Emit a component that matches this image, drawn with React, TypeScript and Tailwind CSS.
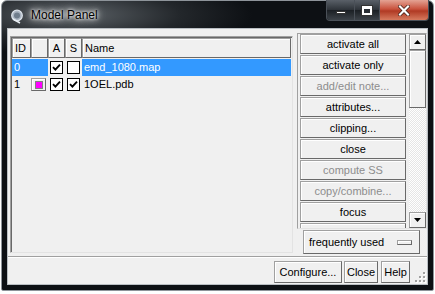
import React from "react";

const F = "font-['Liberation_Sans',Arial,sans-serif]";

function Check({ on }: { on: boolean }) {
  return (
    <div className="w-[13px] h-[13px] border border-black bg-white flex items-center justify-center">
      {on && (
        <svg width="9" height="9" viewBox="0 0 9 9">
          <path d="M1 4.2 L3.4 6.6 L8 1.6" stroke="#000" strokeWidth="1.9" fill="none" />
        </svg>
      )}
    </div>
  );
}

const btnCls =
  "h-[20px] mb-[1px] shrink-0 flex items-center justify-center text-[11px] bg-[#f0f0f0] border border-[#a0a0a0] border-r-[#696969] border-b-[#696969] shadow-[inset_1px_1px_0_#ffffff]";

const raised =
  "bg-[#f0f0f0] border border-[#a0a0a0] border-r-[#696969] border-b-[#696969] shadow-[inset_1px_1px_0_#ffffff]";

const buttons: [string, boolean][] = [
  ["activate all", true],
  ["activate only", true],
  ["add/edit note...", false],
  ["attributes...", true],
  ["clipping...", true],
  ["close", true],
  ["compute SS", false],
  ["copy/combine...", false],
  ["focus", true],
  ["", true],
];

export default function App() {
  return (
    <div className={`w-[435px] h-[294px] bg-white ${F}`}>
      <div className="ml-[1px] w-[433px] h-[291px] rounded-t-[6px] rounded-b-[2px] border border-[#8e949a] bg-[radial-gradient(ellipse_180px_40px_at_70px_14px,#5d6368_0%,#23272b_60%,#0d1014_100%)] flex flex-col">
        {/* title bar */}
        <div className="h-[27px] shrink-0 flex items-start">
          <div className="ml-[8px] mt-[8px] w-[14px] h-[15px]">
            <svg width="14" height="15" viewBox="0 0 14 15">
              <circle cx="7" cy="6.5" r="5.3" fill="#aab4c0" stroke="#dfe6ee" strokeWidth="1.2" />
              <circle cx="7" cy="6.5" r="3" fill="#6f7d8c" />
              <path d="M3 10 L10 14" stroke="#e8eef4" strokeWidth="1.6" />
            </svg>
          </div>
          <div className="ml-[7px] mt-[7px] text-[12px] leading-[14px] text-black [text-shadow:0_0_6px_#ffffff,0_0_3px_#ffffff,0_0_10px_#ffffff]">
            Model Panel
          </div>
          <div className="flex-1" />
          <div className="mr-[4px] -mt-[1px] flex h-[21px] rounded-b-[4px] border border-t-0 border-[#4a5058] overflow-hidden">
            <div className="w-[28px] h-full bg-[linear-gradient(#5a6068,#2d3238_50%,#1b1f24_51%,#3c4248)] border-r border-[#4a5058] flex items-center justify-center">
              <div className="w-[10px] h-[3px] mt-[5px] bg-white border border-[#333]" />
            </div>
            <div className="w-[25px] h-full bg-[linear-gradient(#5a6068,#2d3238_50%,#1b1f24_51%,#3c4248)] border-r border-[#4a5058] flex items-center justify-center">
              <div className="w-[10px] h-[9px] border-2 border-t-[3px] border-white bg-[#2a2f35] outline outline-1 outline-[#333]" />
            </div>
            <div className="w-[48px] h-full bg-[linear-gradient(#e4a394,#c9523d_45%,#b03a24_55%,#d67a5e)] flex items-center justify-center">
              <svg width="12" height="11" viewBox="0 0 12 11">
                <path d="M2 1.5 L10 9.5 M10 1.5 L2 9.5" stroke="#3a1a12" strokeWidth="3.6" strokeLinecap="square" />
                <path d="M2 1.5 L10 9.5 M10 1.5 L2 9.5" stroke="#ffffff" strokeWidth="2.2" strokeLinecap="square" />
              </svg>
            </div>
          </div>
        </div>

        {/* content */}
        <div className="mx-[5px] w-[421px] h-[257px] border border-[#b9bec3] bg-[#f0f0f0] flex flex-col relative">
          <div className="h-[227px] shrink-0 flex items-start">
            {/* table */}
            <div className="ml-[2px] mt-[7px] w-[283px] h-[217px] border border-[#a0a0a0] border-r-[#e3e3e3] border-b-[#e3e3e3] shadow-[inset_1px_1px_0_#696969] pl-[1px] pt-[1px] flex flex-col text-[11px]">
              <div className="h-[20px] flex shrink-0">
                <div className={`w-[19px] ${raised} flex items-center pl-[2px]`}>ID</div>
                <div className={`w-[17px] ${raised}`} />
                <div className={`w-[17px] ${raised} flex items-center justify-center`}>A</div>
                <div className={`w-[17px] ${raised} flex items-center justify-center`}>S</div>
                <div className={`flex-1 mr-[1px] ${raised} flex items-center pl-[2px]`}>Name</div>
              </div>
              <div className="h-[17px] flex shrink-0 items-center mt-[1px]">
                <div className="w-[36px] h-full bg-[#3399ff] text-white flex items-center pl-[2px]">0</div>
                <div className="w-[17px] h-full flex items-center justify-center"><Check on={true} /></div>
                <div className="w-[17px] h-full flex items-center justify-center"><Check on={false} /></div>
                <div className="flex-1 mr-[1px] h-full bg-[#3399ff] text-white flex items-center pl-[2px]">emd_1080.map</div>
              </div>
              <div className="h-[17px] flex shrink-0 items-center">
                <div className="w-[19px] h-full flex items-center pl-[2px]">1</div>
                <div className="w-[17px] h-full flex items-center justify-start">
                  <div className={`w-[15px] h-[13px] ${raised} flex items-center justify-center`}>
                    <div className="w-[8px] h-[8px] bg-[#ff00ff] border border-[#808080]" />
                  </div>
                </div>
                <div className="w-[17px] h-full flex items-center justify-center"><Check on={true} /></div>
                <div className="w-[17px] h-full flex items-center justify-center"><Check on={true} /></div>
                <div className="flex-1 h-full flex items-center pl-[2px]">1OEL.pdb</div>
              </div>
            </div>

            {/* right column */}
            <div className="ml-[4px] mt-[4px] w-[130px] flex flex-col">
              <div className="h-[196px] border border-[#a0a0a0] border-r-[#e3e3e3] border-b-[#e3e3e3] flex">
                <div className="ml-[2px] w-[106px] h-[194px] overflow-hidden flex flex-col">
                  {buttons.map(([t, en], i) => (
                    <div key={i} className={`${btnCls} ${en ? "text-black" : "text-[#8d8d8d]"}`}>
                      {t}
                    </div>
                  ))}
                </div>
                <div className="ml-[3px] w-[17px] h-[194px] flex flex-col">
                  <div className={`h-[16px] ${raised} flex items-center justify-center`}>
                    <svg width="7" height="4" viewBox="0 0 7 4"><path d="M3.5 0 L7 4 L0 4 Z" fill="#000" /></svg>
                  </div>
                  <div className={`h-[58px] ${raised}`} />
                  <div className="flex-1 bg-[repeating-conic-gradient(#ffffff_0%_25%,#e6e6e6_0%_50%)] bg-[length:2px_2px]" />
                  <div className={`h-[16px] ${raised} flex items-center justify-center`}>
                    <svg width="7" height="4" viewBox="0 0 7 4"><path d="M0 0 L7 0 L3.5 4 Z" fill="#000" /></svg>
                  </div>
                </div>
              </div>
              <div className={`mt-[1px] ml-[6px] w-[117px] h-[24px] ${raised} flex items-center text-[11px]`}>
                <span className="ml-[5px]">frequently used</span>
                <div className="flex-1" />
                <div className="mr-[7px] w-[15px] h-[5px] bg-[#f0f0f0] border border-[#a0a0a0] border-r-[#696969] border-b-[#696969] shadow-[inset_1px_1px_0_#ffffff]" />
              </div>
            </div>
          </div>

          {/* separator */}
          <div className="h-[2px] shrink-0 border-t border-[#a0a0a0] border-b border-b-white" />

          {/* bottom bar */}
          <div className="h-[26px] shrink-0 flex items-start justify-end pr-[17px] pt-[3px] text-[11px]">
            <div className={`w-[68px] h-[22px] ${raised} flex items-center justify-center`}>Configure...</div>
            <div className={`ml-[2px] w-[34px] h-[22px] ${raised} flex items-center justify-center`}>Close</div>
            <div className={`ml-[3px] w-[29px] h-[22px] ${raised} flex items-center justify-center`}>Help</div>
          </div>

          <div className="absolute right-[1px] bottom-[1px]">
            <svg width="12" height="12" viewBox="0 0 12 12">
              {[[9, 1], [9, 5], [5, 5], [9, 9], [5, 9], [1, 9]].map(([x, y], i) => (
                <g key={i}>
                  <rect x={x + 1} y={y + 1} width="2" height="2" fill="#ffffff" />
                  <rect x={x} y={y} width="2" height="2" fill="#a0a0a0" />
                </g>
              ))}
            </svg>
          </div>
        </div>
      </div>
    </div>
  );
}
